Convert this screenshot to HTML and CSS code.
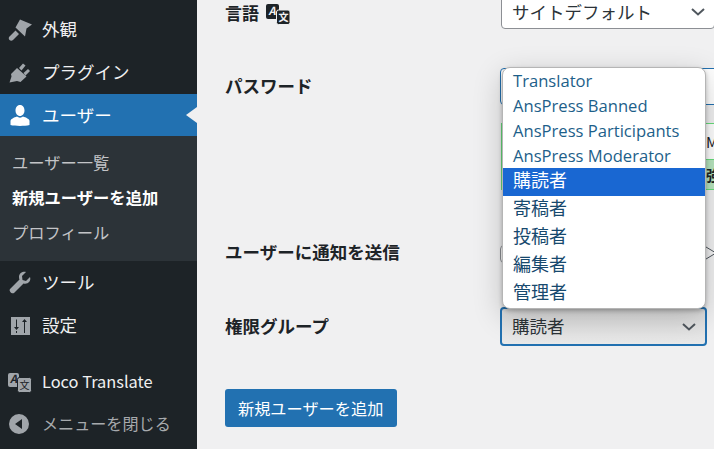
FILE: index.html
```html
<!DOCTYPE html>
<html>
<head>
    <meta charset="UTF-8">
    <title>新規ユーザーを追加</title>
    <link rel="stylesheet" href="styles.css">
</head>
<body>
    <div class="l-wrapper">
        <nav class="menu">
            <a class="menu-item" href="#">
                <svg class="menu-icon" viewBox="0 0 24 24"><path d="M12 1.500L24 6.500l-5.500 4-1.500 8-9.500-9zM7.500 12.500l3.500 3.500-6 6c-1 1-2.500 1-3.500 0s-1-2.500 0-3.500z"/></svg>
                <span>外観</span>
            </a>
            <a class="menu-item" href="#">
                <svg class="menu-icon" viewBox="0 0 24 24"><path d="M1.500 21.500l2-6L3 13l6-6 9.500 8.500-6 5.500L9 20zM11 7l4-4.500 2.500 2-4 5zM15.500 12L20 8l2 2-4.500 4.500z"/></svg>
                <span>プラグイン</span>
            </a>
            <a class="menu-item is-current" href="#">
                <svg class="menu-icon" viewBox="0 0 24 24"><path d="M12 2c3 0 4.500 2.500 4.500 5.500S14.500 13 12 13 7.500 10.500 7.500 7.500 9 2 12 2zM2.500 22v-4c0-2 3.500-3.500 6.500-4.500 1.500 1.500 4.500 1.500 6 0 3 1 6.500 2.500 6.500 4.500v4c-5 1.200-14 1.200-19 0z"/></svg>
                <span>ユーザー</span>
            </a>
            <div class="submenu">
                <a href="#">ユーザー一覧</a>
                <a class="is-active" href="#">新規ユーザーを追加</a>
                <a href="#">プロフィール</a>
            </div>
            <a class="menu-item" href="#">
                <svg class="menu-icon" viewBox="0 0 24 24"><path d="M22 6l-4 4-3.500-1L14 5l4-4c-3-.8-7 1-7 5 0 1 .2 2 .5 2.500L2 18c-1.500 2 2 5.500 4 4l9.500-9.500c4 1.300 8-2.500 6.500-6.500z"/></svg>
                <span>ツール</span>
            </a>
            <a class="menu-item" href="#">
                <svg class="menu-icon" viewBox="0 0 24 24"><path fill-rule="evenodd" d="M3 3h19v18H3zM8 5.500v7.500H6l2.500 3 2.500-3H9V5.500zM8 17v2h1v-2zM16.500 5L14 8h2v11h1V8h2z"/></svg>
                <span>設定</span>
            </a>
            <a class="menu-item is-loco" href="#">
                <svg class="menu-icon" viewBox="0 0 24 24">
                    <rect x="0" y="3" width="11" height="14" rx="2"/>
                    <text class="glyph-dark" x="2" y="13" font-size="11" font-style="italic" font-weight="700">A</text>
                    <rect class="tile-dark" x="9.500" y="7.500" width="14" height="15" rx="2"/>
                    <text class="glyph-dark" x="11.500" y="19" font-size="10">文</text>
                </svg>
                <span>Loco Translate</span>
            </a>
            <a class="menu-item is-collapse" href="#">
                <svg class="menu-icon" viewBox="0 0 24 24"><path fill-rule="evenodd" d="M11 2a10 10 0 1 0 0 20 10 10 0 0 0 0-20zM14 7v10l-7-5z"/></svg>
                <span>メニューを閉じる</span>
            </a>
        </nav>

        <main class="content">
            <div class="row row-lang">
                <div class="row-label">言語
                    <svg class="lang-icon" viewBox="0 0 24 24">
                        <rect x="0" y="1" width="13" height="15" rx="2"/>
                        <text class="glyph-light" x="2.500" y="12" font-size="11" font-style="italic" font-weight="700">A</text>
                        <rect class="tile-light" x="10.500" y="7" width="13.500" height="14.500" rx="2"/>
                        <text class="glyph-light" x="12.500" y="18" font-size="10">文</text>
                    </svg>
                </div>
                <div class="select select-lang">
                    <span>サイトデフォルト</span>
                    <svg class="chevron" viewBox="0 0 14 8"><path d="M1 1l6 5.500L13 1"/></svg>
                </div>
            </div>

            <div class="row row-pass">
                <div class="row-label">パスワード</div>
                <div class="pass-field">
                    <div class="pass-input"></div>
                    <div class="pass-text">M</div>
                    <div class="pass-meter">強</div>
                </div>
            </div>

            <div class="row row-notify">
                <div class="row-label">ユーザーに通知を送信</div>
                <div class="notify-field">
                    <span class="check"></span>
                    <svg class="notify-mark" viewBox="0 0 10 14"><path d="M0 1l10 6-10 6"/></svg>
                </div>
            </div>

            <div class="row row-role">
                <div class="row-label">権限グループ</div>
                <div class="select select-role">
                    <span>購読者</span>
                    <svg class="chevron" viewBox="0 0 14 8"><path d="M1 1l6 5.500L13 1"/></svg>
                </div>
            </div>

            <a class="button" href="#">新規ユーザーを追加</a>

            <ul class="dropdown">
                <li>Translator</li>
                <li>AnsPress Banned</li>
                <li>AnsPress Participants</li>
                <li>AnsPress Moderator</li>
                <li class="is-selected">購読者</li>
                <li>寄稿者</li>
                <li>投稿者</li>
                <li>編集者</li>
                <li>管理者</li>
            </ul>
        </main>
    </div>
</body>
</html>
```

FILE: styles.css
```css
HTML, BODY {
    height: 100%;
    margin: 0;
    overflow: hidden;
}
BODY {
    font: 16px/1.4 "Noto Sans CJK JP", "Open Sans", sans-serif;
    color: #1d2327;
    background: #f0f0f1;
}
A {
    color: inherit;
    text-decoration: none;
}
.l-wrapper {
    display: flex;
    height: 449px;
}

/* side menu */
.menu {
    flex: 0 0 197px;
    padding-top: 8px;
    box-sizing: border-box;
    background: #1d2327;
    color: #f0f0f1;
}
.menu-item {
    display: flex;
    align-items: center;
    gap: 10px;
    height: 43px;
    padding-left: 8px;
    font-size: 17.500px;
}
.menu-icon {
    width: 24px;
    height: 24px;
    fill: #a0a5aa;
    flex: none;
}
.glyph-dark {
    fill: #1d2327;
}
.tile-dark {
    stroke: #1d2327;
}
.is-current {
    position: relative;
    height: 42px;
    background: #2271b1;
    color: #fff;
}
.is-current .menu-icon {
    fill: #fff;
}
.is-current::after {
    content: "";
    position: absolute;
    right: 0;
    top: 13px;
    border: 8px solid transparent;
    border-left: 0;
    border-right: 11px solid #f0f0f1;
}
.submenu {
    display: flex;
    flex-direction: column;
    height: 125px;
    padding-top: 9px;
    box-sizing: border-box;
    background: #2c3338;
    color: #c3c4c7;
    font-size: 16.300px;
}
.submenu A {
    height: 35px;
    line-height: 35px;
    padding-left: 12px;
}
.submenu .is-active {
    color: #fff;
    font-weight: 700;
}
.is-loco {
    height: 41px;
    padding-bottom: 1px;
    margin-top: 14px;
    font-size: 16.400px;
}
.is-collapse {
    height: 41px;
    padding-bottom: 1px;
    font-size: 16.100px;
    color: #a7aaad;
}

/* form */
.content {
    position: relative;
    flex: 1;
    min-width: 0;
    padding: 1px 0 0 28px;
}
.row {
    display: flex;
}
.row-label {
    flex: 0 0 275px;
    font-weight: 700;
    font-size: 17.500px;
    color: #1d2327;
}
.row-lang {
    height: 73px;
}
.row-lang .row-label {
    display: flex;
    align-items: center;
    align-self: flex-start;
    gap: 7px;
    height: 24px;
    font-size: 17px;
}
.lang-icon {
    width: 24px;
    height: 24px;
    margin-top: 3px;
    fill: #1d2327;
}
.glyph-light {
    fill: #f0f0f1;
}
.tile-light {
    stroke: #f0f0f1;
}
.select {
    display: flex;
    justify-content: space-between;
    align-items: center;
    flex: none;
    box-sizing: border-box;
    padding: 0 9px 0 10px;
    background: #fff;
    border: 1px solid #8c8f94;
    border-radius: 4px;
    font-size: 17.500px;
    color: #2c3338;
}
.select-lang {
    width: 214px;
    height: 34px;
    margin: -6px 0 0 1px;
}
.chevron {
    width: 14px;
    height: 8px;
    fill: none;
    stroke: #50575e;
    stroke-width: 2;
}
.row-pass {
    height: 166px;
}
.pass-field {
    flex: none;
    width: 230px;
    margin-top: -6px;
}
.pass-input {
    height: 37px;
    margin-bottom: 18px;
    box-sizing: border-box;
    background: #fff;
    border: 1px solid #2271b1;
    border-radius: 4px;
}
.pass-text, .pass-meter {
    box-sizing: border-box;
    margin-left: 1px;
    padding-left: 204px;
    font-size: 15px;
    border: 1px solid #68de7c;
}
.pass-text {
    height: 36px;
    line-height: 36px;
    background: #fff;
    border-bottom: 0;
}
.pass-meter {
    height: 31px;
    line-height: 29px;
    font-weight: 700;
    background: #b8e6bf;
}
.row-notify {
    height: 74px;
}
.notify-field {
    display: flex;
    justify-content: space-between;
    flex: none;
    width: 216px;
    height: 18px;
    margin-top: 5px;
}
.check {
    box-sizing: border-box;
    width: 16px;
    height: 18px;
    background: #fff;
    border: 1px solid #8c8f94;
    border-radius: 4px;
}
.notify-mark {
    width: 10px;
    height: 14px;
    margin-top: 1px;
    fill: none;
    stroke: #50575e;
}
.row-role {
    height: 75px;
}
.select-role {
    width: 207px;
    height: 39px;
    margin-top: -7px;
    border: 2px solid #2271b1;
    background: linear-gradient(#dcdcdc, #e9e9e9);
}
.button {
    display: inline-block;
    padding: 0 14px 0 13px;
    height: 38px;
    line-height: 38px;
    background: #2271b1;
    color: #fff;
    font-size: 16.200px;
    border-radius: 3px;
}

/* open list of the role select */
.dropdown {
    position: absolute;
    left: 305px;
    top: 67px;
    width: 204px;
    height: 242px;
    box-sizing: border-box;
    margin: 0;
    padding: 0;
    list-style: none;
    background: #fff;
    border: 1px solid #b5b5b5;
    border-radius: 8px;
    overflow: hidden;
    box-shadow: 0 2px 4px rgba(0, 0, 0, .25), 0 8px 30px rgba(0, 0, 0, .2);
    font: 16.600px/25px "Open Sans", "Noto Sans CJK JP", sans-serif;
    color: #1d5f8a;
}
.dropdown LI {
    height: 25px;
    padding-left: 10px;
}
.dropdown .is-selected, .dropdown .is-selected ~ LI {
    height: 28px;
    line-height: 24px;
    font-size: 18px;
}
.dropdown .is-selected {
    background: #1967d2;
    color: #fff;
}
.dropdown .is-selected ~ LI {
    color: #17496e;
}
```
